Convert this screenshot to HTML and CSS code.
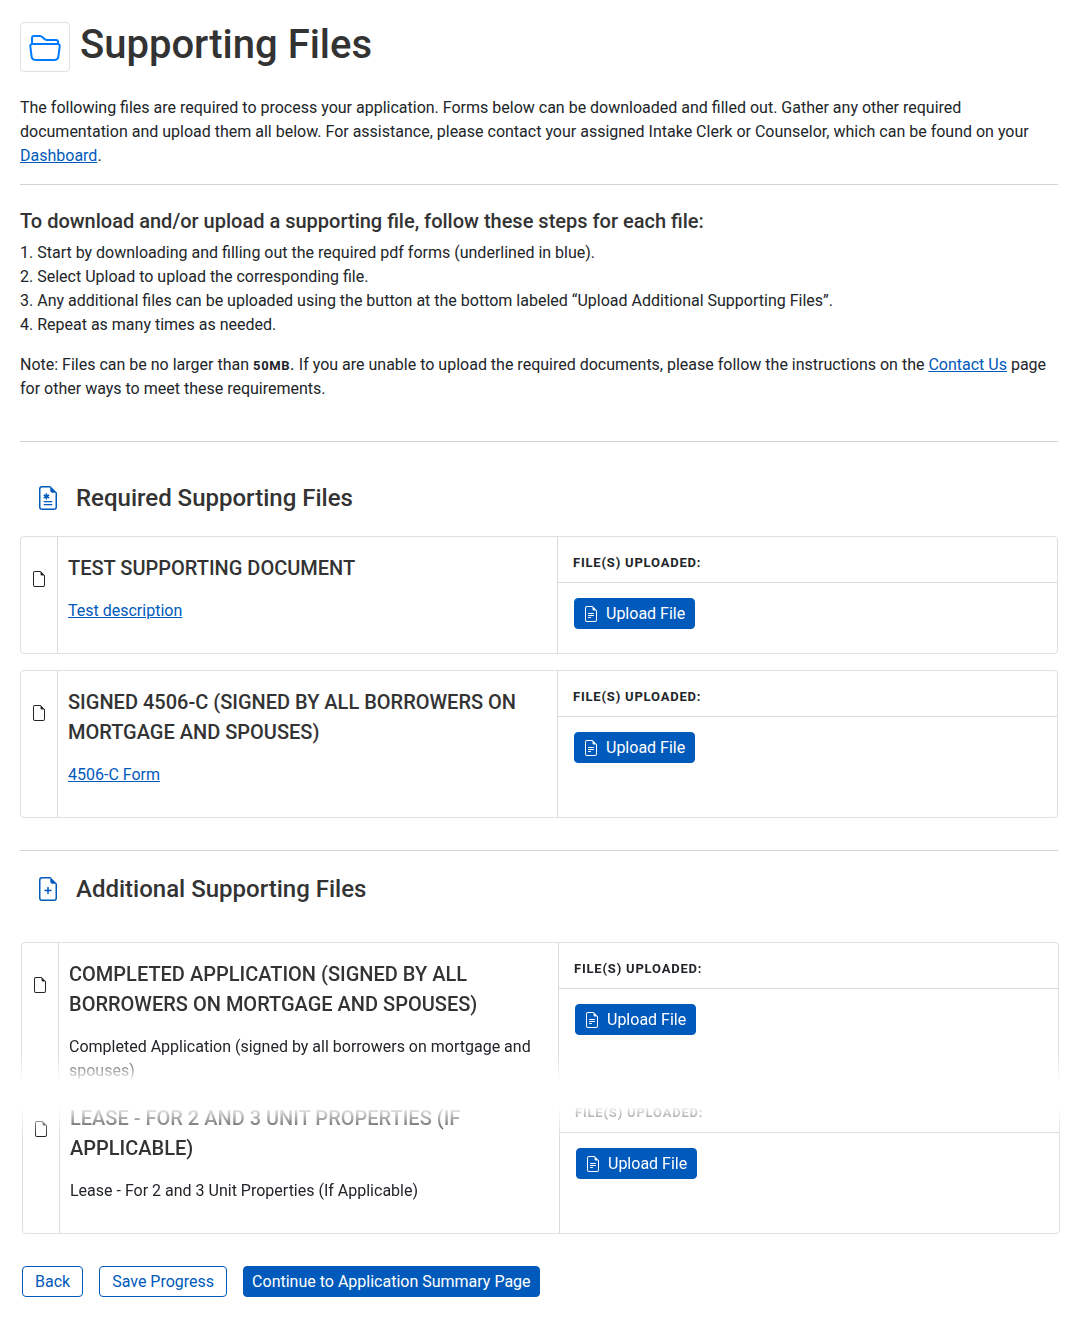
FILE: index.html
```html
<!DOCTYPE html>
<html lang="en">
<head>
    <meta charset="UTF-8">
    <meta name="viewport" content="width=device-width, initial-scale=1.0">
    <title>Supporting Files</title>
    <link rel="stylesheet" href="styles.css">
</head>
<body>
    <!-- Icon shapes shared by the rows below -->
    <svg class="icon-defs" viewBox="0 0 16 16">
        <symbol id="file" viewBox="0 0 16 16">
            <path d="M14 4.5V14a2 2 0 0 1-2 2H4a2 2 0 0 1-2-2V2a2 2 0 0 1 2-2h5.5zm-3 0A1.5 1.5 0 0 1 9.5 3V1H4a1 1 0 0 0-1 1v12a1 1 0 0 0 1 1h8a1 1 0 0 0 1-1V4.5z"/>
        </symbol>
        <symbol id="file-text" viewBox="0 0 16 16">
            <path d="M5.5 7a.5.5 0 0 0 0 1h5a.5.5 0 0 0 0-1zM5 9.5a.5.5 0 0 1 .5-.5h5a.5.5 0 0 1 0 1h-5a.5.5 0 0 1-.5-.5m0 2a.5.5 0 0 1 .5-.5h2a.5.5 0 0 1 0 1h-2a.5.5 0 0 1-.5-.5"/>
            <path d="M9.5 0H4a2 2 0 0 0-2 2v12a2 2 0 0 0 2 2h8a2 2 0 0 0 2-2V4.5zm0 1v2A1.5 1.5 0 0 0 11 4.5h2V14a1 1 0 0 1-1 1H4a1 1 0 0 1-1-1V2a1 1 0 0 1 1-1z"/>
        </symbol>
    </svg>

    <div class="page">
        <header class="page-title">
            <span class="title-icon">
                <svg width="32" height="32" viewBox="0 0 16 16"><path d="M1 3.5A1.5 1.5 0 0 1 2.5 2h2.764c.958 0 1.76.56 2.311 1.184C7.985 3.648 8.48 4 9 4h4.5A1.5 1.5 0 0 1 15 5.5v.64c.57.265.94.876.856 1.546l-.64 5.124A2.5 2.5 0 0 1 12.733 15H3.266a2.5 2.5 0 0 1-2.481-2.19l-.64-5.124A1.5 1.5 0 0 1 1 6.14zM2 6h12v-.5a.5.5 0 0 0-.5-.5H9c-.964 0-1.71-.629-2.174-1.154C6.374 3.334 5.82 3 5.264 3H2.5a.5.5 0 0 0-.5.5zm-.367 1a.5.5 0 0 0-.496.562l.64 5.124A1.5 1.5 0 0 0 3.266 14h9.468a1.5 1.5 0 0 0 1.489-1.314l.64-5.124A.5.5 0 0 0 14.367 7z"/></svg>
            </span>
            <h1>Supporting Files</h1>
        </header>

        <p class="intro">The following files are required to process your application. Forms below can be downloaded and filled out. Gather any other required documentation and upload them all below. For assistance, please contact your assigned Intake Clerk or Counselor, which can be found on your <a href="#">Dashboard</a>.</p>

        <hr>

        <h2 class="steps-title">To download and/or upload a supporting file, follow these steps for each file:</h2>
        <ol class="steps">
            <li>Start by downloading and filling out the required pdf forms (underlined in blue).</li>
            <li>Select Upload to upload the corresponding file.</li>
            <li>Any additional files can be uploaded using the button at the bottom labeled “Upload Additional Supporting Files”.</li>
            <li>Repeat as many times as needed.</li>
        </ol>
        <p class="note">Note: Files can be no larger than <strong>50MB.</strong> If you are unable to upload the required documents, please follow the instructions on the <a href="#">Contact Us</a> page for other ways to meet these requirements.</p>

        <hr>

        <h3 class="section-title required">
            <svg width="24" height="24" viewBox="0 0 16 16"><use href="#file"/><path d="M6.45 4.8h1v1.25l1.1-.62.5.86-1.1.61 1.1.61-.5.86-1.1-.62V9h-1V7.75l-1.1.62-.5-.86 1.1-.61-1.1-.61.5-.86 1.1.62zM5.5 10h5a.45.45 0 0 1 0 .9h-5a.45.45 0 0 1 0-.9M5.500 12h5a.45.45 0 0 1 0 .9h-5a.45.45 0 0 1 0-.9"/></svg>
            Required Supporting Files
        </h3>

        <div class="card">
            <div class="card-icon"><svg width="16" height="16"><use href="#file"/></svg></div>
            <div class="card-info">
                <h4>Test Supporting Document</h4>
                <p><a href="#">Test description</a></p>
            </div>
            <div class="card-upload">
                <div class="upload-label">File(s) Uploaded:</div>
                <button class="btn btn-primary"><svg width="16" height="16"><use href="#file-text"/></svg>Upload File</button>
            </div>
        </div>

        <div class="card tall">
            <div class="card-icon"><svg width="16" height="16"><use href="#file"/></svg></div>
            <div class="card-info">
                <h4>Signed 4506-C (signed by all borrowers on mortgage and spouses)</h4>
                <p><a href="#">4506-C Form</a></p>
            </div>
            <div class="card-upload">
                <div class="upload-label">File(s) Uploaded:</div>
                <button class="btn btn-primary"><svg width="16" height="16"><use href="#file-text"/></svg>Upload File</button>
            </div>
        </div>

        <hr>

        <h3 class="section-title additional">
            <svg width="24" height="24" viewBox="0 0 16 16"><use href="#file"/><path d="M8 6.5a.5.5 0 0 1 .5.5v1.500H10a.5.5 0 0 1 0 1H8.500V11a.5.5 0 0 1-1 0V9.500H6a.5.5 0 0 1 0-1h1.500V7a.5.5 0 0 1 .5-.5"/></svg>
            Additional Supporting Files
        </h3>

        <div class="card fade-bottom">
            <div class="card-icon"><svg width="16" height="16"><use href="#file"/></svg></div>
            <div class="card-info">
                <h4>Completed Application (signed by all borrowers on mortgage and spouses)</h4>
                <p>Completed Application (signed by all borrowers on mortgage and spouses)</p>
            </div>
            <div class="card-upload">
                <div class="upload-label">File(s) Uploaded:</div>
                <button class="btn btn-primary"><svg width="16" height="16"><use href="#file-text"/></svg>Upload File</button>
            </div>
        </div>

        <div class="card tall fade-top">
            <div class="card-icon"><svg width="16" height="16"><use href="#file"/></svg></div>
            <div class="card-info">
                <h4>Lease - For 2 and 3 Unit Properties (If Applicable)</h4>
                <p>Lease - For 2 and 3 Unit Properties (If Applicable)</p>
            </div>
            <div class="card-upload">
                <div class="upload-label">File(s) Uploaded:</div>
                <button class="btn btn-primary"><svg width="16" height="16"><use href="#file-text"/></svg>Upload File</button>
            </div>
        </div>

        <div class="actions">
            <button class="btn btn-outline">Back</button>
            <button class="btn btn-outline">Save Progress</button>
            <button class="btn btn-primary">Continue to Application Summary Page</button>
        </div>
    </div>
</body>
</html>
```

FILE: styles.css
```css
* {
    margin: 0;
    padding: 0;
    box-sizing: border-box;
}

body {
    font-family: Roboto, "Liberation Sans", sans-serif;
    font-size: 16px;
    line-height: 24px;
    color: #212529;
    background: #fff;
}

svg {
    display: block;
    fill: currentColor;
    flex-shrink: 0;
}

.icon-defs {
    display: none;
}

.page {
    padding: 22px 22px 20px 20px;
}

a {
    color: #005abb;
    text-decoration: underline;
}

hr {
    border: 0;
    border-top: 1px solid #d0d4d8;
}

h1, h2, h3, h4 {
    font-weight: 500;
    color: #333;
}

.page-title {
    display: flex;
    gap: 10px;
    height: 50px;
}

.title-icon {
    display: flex;
    align-items: center;
    justify-content: center;
    width: 50px;
    height: 50px;
    border: 1px solid #dee2e6;
    border-radius: 4px;
    color: #007bff;
}

h1 {
    font-size: 40px;
    line-height: 46px;
}

.intro {
    margin: 24px 0 16px;
}

.steps-title {
    margin-top: 24px;
    font-size: 20px;
    line-height: 24px;
}

.steps {
    margin: 8px 0 16px;
}

/* Numbers sit in the text so they line up with the paragraph edge */
.steps li {
    display: block;
    counter-increment: step;
}

.steps li::before {
    content: counter(step) ". ";
}

.note {
    margin-bottom: 40px;
}

.note strong {
    font-size: 13px;
    font-weight: 700;
    line-height: 1;
    letter-spacing: 0.7px;
}

.section-title {
    display: flex;
    align-items: center;
    gap: 16px;
    padding-left: 16px;
    font-size: 24px;
    line-height: 30px;
}

.section-title svg {
    color: #005abb;
}

.required {
    margin: 41px 0 23px;
}

.additional {
    margin: 23px 0 38px;
}

/* File cards */
.card {
    display: grid;
    grid-template-columns: 37px 500px 1fr;
    height: 118px;
    margin-bottom: 16px;
    border: 1px solid #dfdfdf;
    border-radius: 4px;
}

.card.tall {
    height: 148px;
    margin-bottom: 32px;
}

.card-icon {
    padding: 34px 0 0 10px;
    border-right: 1px solid #d8dbdf;
}

.card-info {
    padding: 16px 10px;
    border-right: 1px solid #d8dbdf;
}

.card h4 {
    margin-bottom: 16px;
    font-size: 20px;
    line-height: 30px;
    text-transform: uppercase;
}

.upload-label {
    height: 46px;
    padding: 14px 16px 0 15px;
    border-bottom: 1px solid #d8dbdf;
    font-size: 13px;
    font-weight: 700;
    letter-spacing: 0.8px;
    text-transform: uppercase;
}

.card-upload .btn {
    margin: 15px 16px;
    padding-right: 9px;
}

/* The list is cut between these two cards */
.card.fade-bottom {
    height: 144px;
    margin: 0 -1px 0 1px;
    border-bottom: 0;
    -webkit-mask-image: linear-gradient(#000 112px, transparent 140px);
    mask-image: linear-gradient(#000 112px, transparent 140px);
}

.card.fade-top {
    margin-left: 2px;
    margin-right: -2px;
    -webkit-mask-image: linear-gradient(transparent 20px, #000 50px);
    mask-image: linear-gradient(transparent 20px, #000 50px);
}

/* Buttons */
.btn {
    display: flex;
    align-items: center;
    height: 31px;
    padding: 0 8px;
    border: 1px solid #005abb;
    border-radius: 4px;
    font: inherit;
    cursor: pointer;
}

.btn-primary {
    background: #005abb;
    color: #fff;
}

.btn svg {
    margin-right: 7px;
}

.btn-outline {
    padding: 0 12px;
    background: #fff;
    color: #005abb;
}

.actions {
    display: flex;
    gap: 16px;
    padding-left: 2px;
}
```
